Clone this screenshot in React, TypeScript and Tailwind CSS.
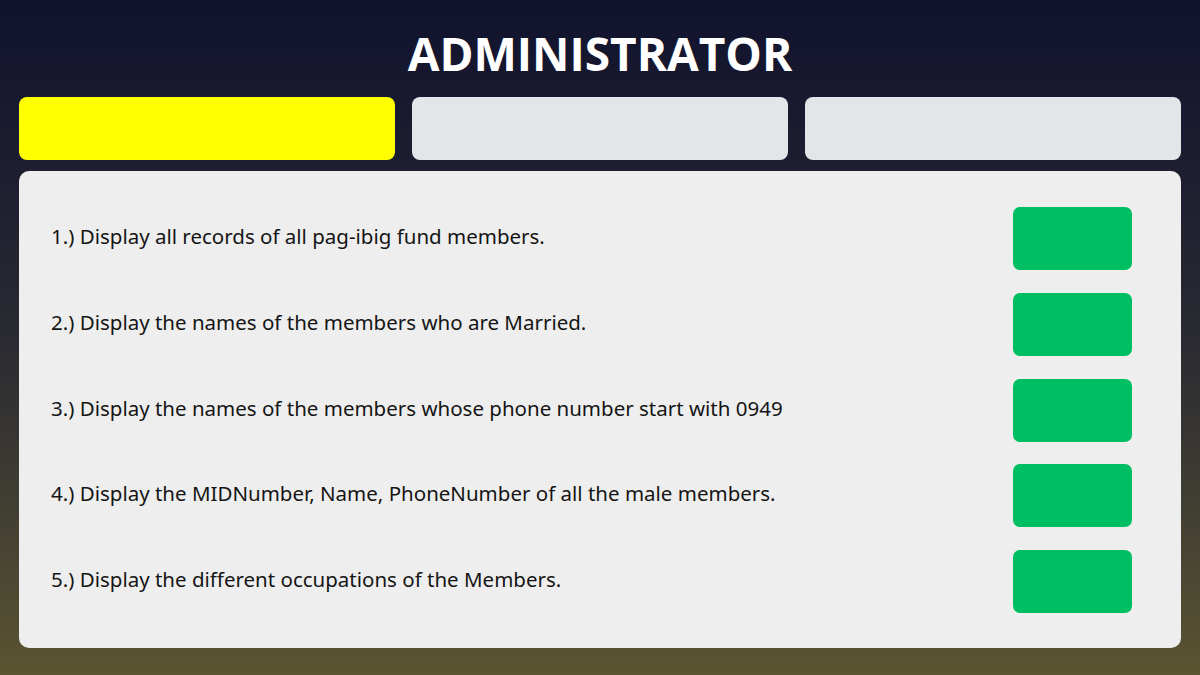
const items = [
  "1.) Display all records of all pag-ibig fund members.",
  "2.) Display the names of the members who are Married.",
  "3.) Display the names of the members whose phone number start with 0949",
  "4.) Display the MIDNumber, Name, PhoneNumber of all the male members.",
  "5.) Display the different occupations of the Members.",
];

export default function App() {
  return (
    <div className="w-[1200px] h-[675px] bg-gradient-to-b from-[#11122e] via-[#2a2a31] to-[#5a5431] px-[19px] flex flex-col font-['Open_Sans',sans-serif]">
      {/* TITLE */}
      <div className="h-[97px] flex items-center justify-center">
        <h1 className="text-white font-bold text-[46px] leading-none pt-[8px]">
          ADMINISTRATOR
        </h1>
      </div>

      {/* TABS */}
      <div className="grid grid-cols-3 gap-[17px] h-[63px]">
        <button className="bg-[#ffff00] rounded-[8px]"></button>
        <button className="bg-[#e2e6e8] rounded-[8px]"></button>
        <button className="bg-[#e2e6e8] rounded-[8px]"></button>
      </div>

      {/* PANEL */}
      <div className="mt-[11px] h-[477px] bg-[#eeeeee] rounded-[10px] pl-[32px] pr-[49px] pt-[36px] flex flex-col gap-[22.75px]">
        {items.map((t) => (
          <div key={t} className="flex items-center justify-between h-[63px]">
            <p className="text-[#151515] text-[20.5px] font-['Noto_Sans',sans-serif] pb-[4px]">{t}</p>
            <button className="w-[119px] h-[63px] bg-[#00bf63] rounded-[7px]"></button>
          </div>
        ))}
      </div>
    </div>
  );
}
